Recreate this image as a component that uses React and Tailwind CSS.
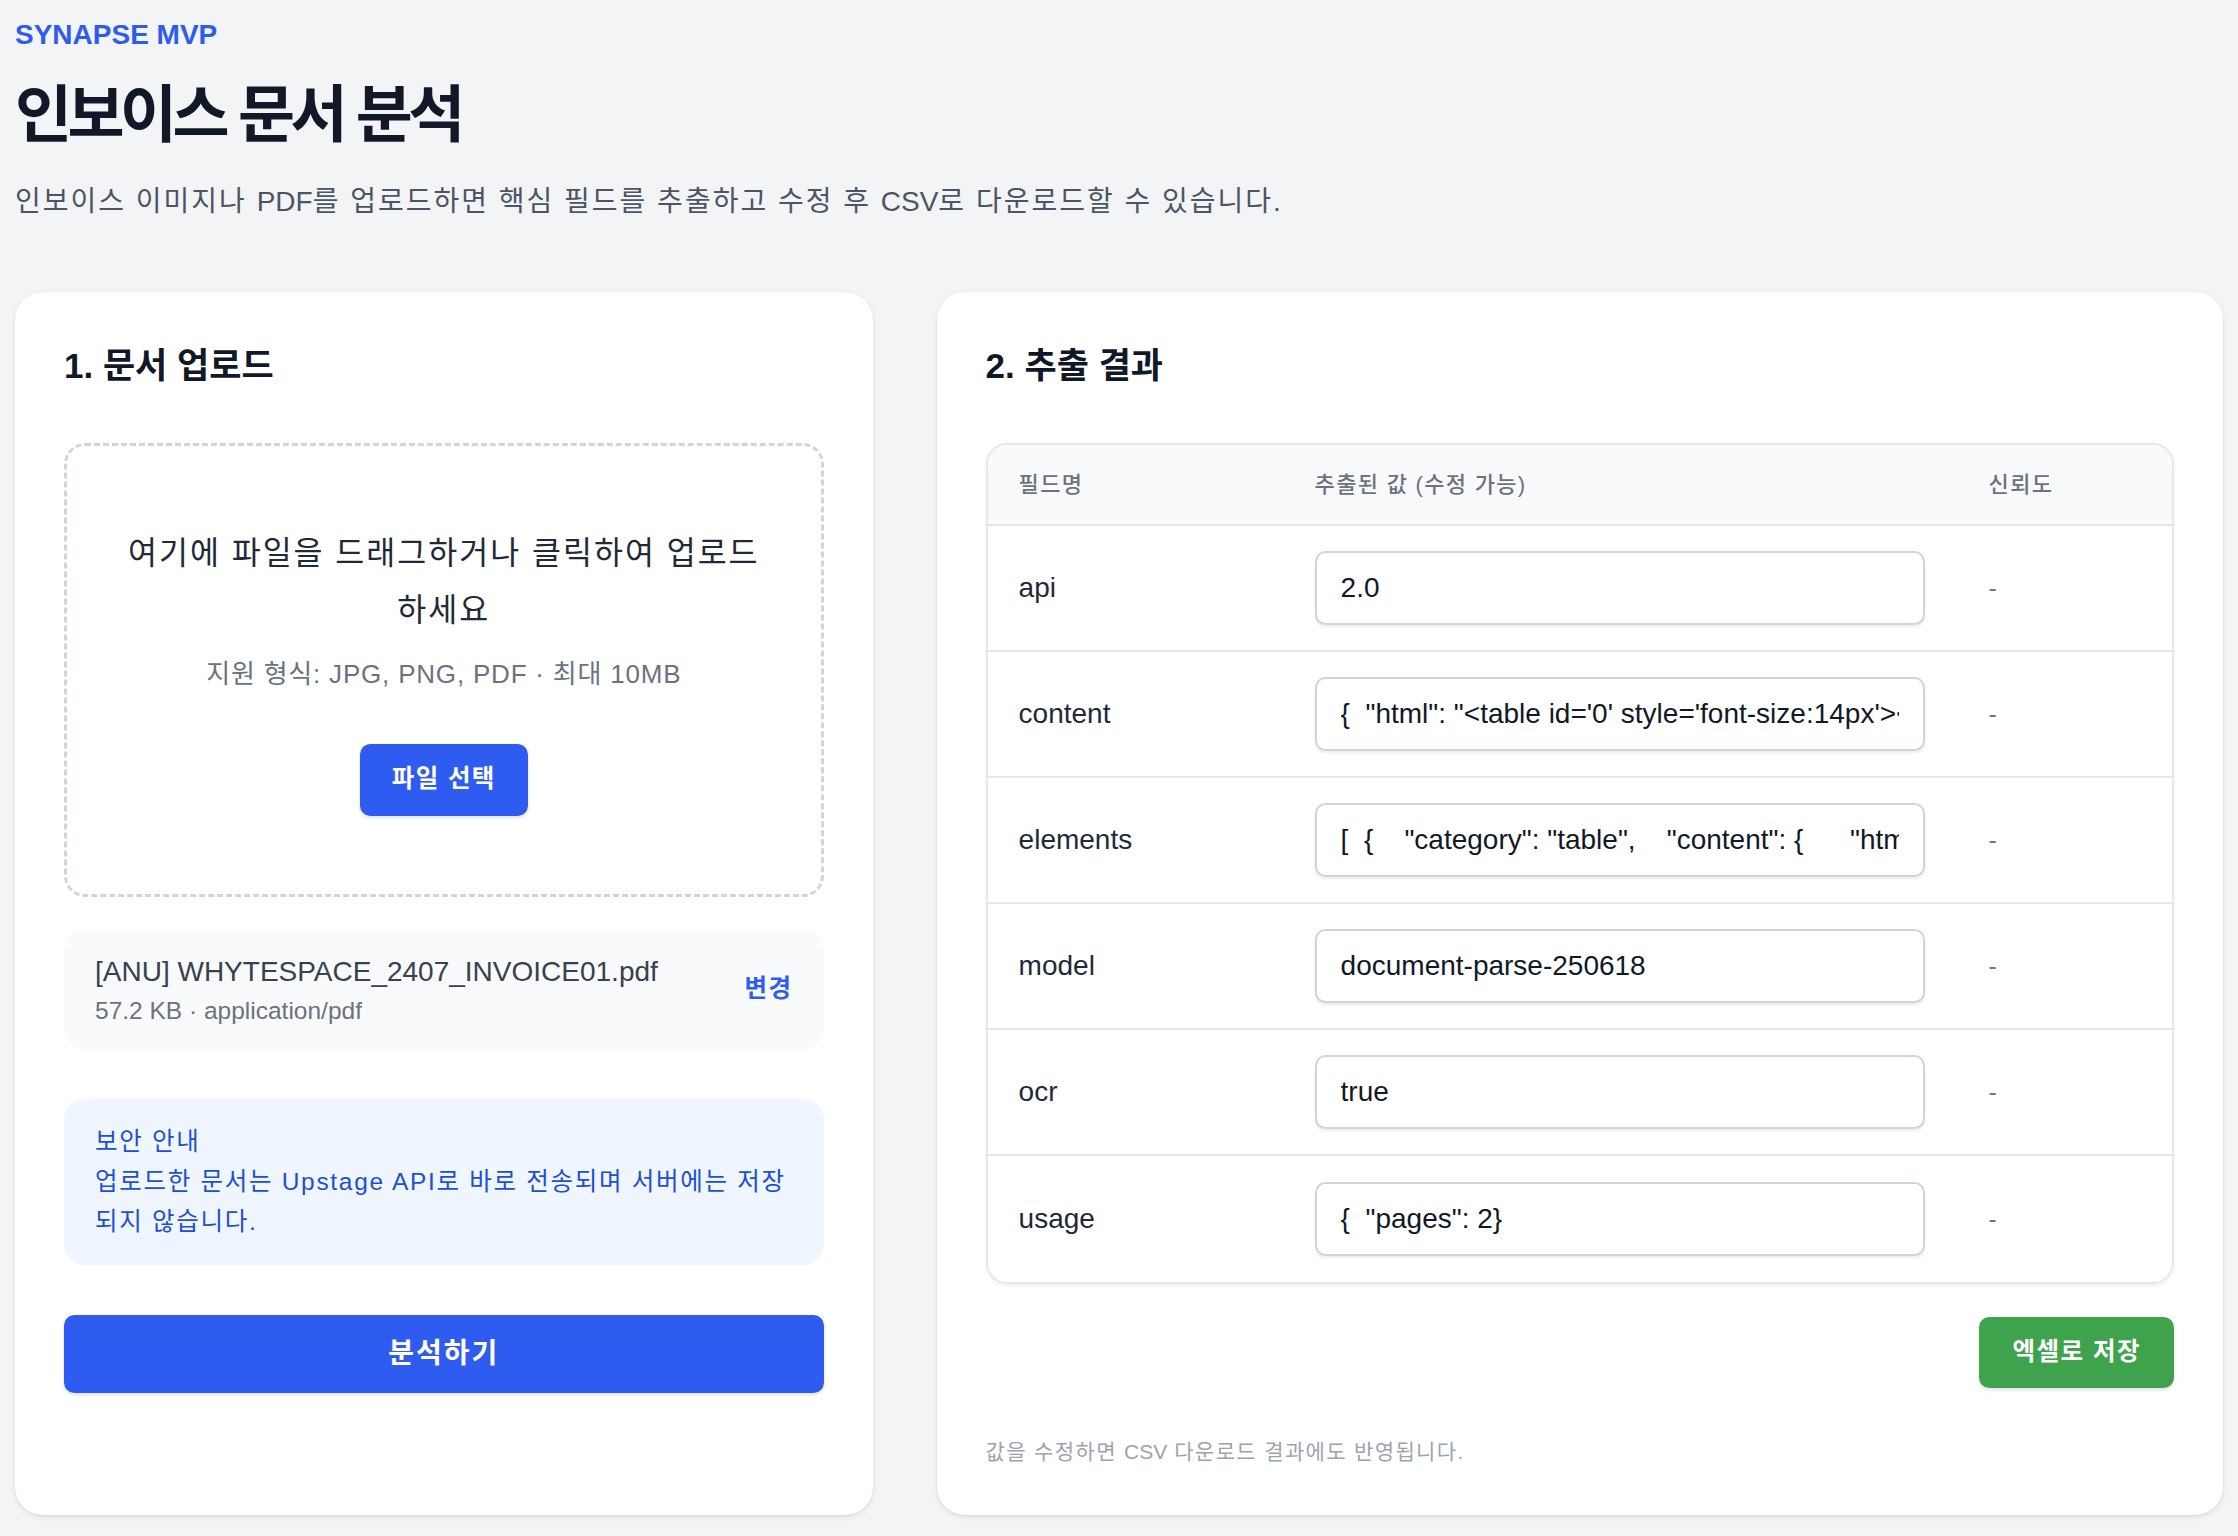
import React from 'react';

const rows = [
  { name: 'api', value: '2.0' },
  {
    name: 'content',
    value: JSON.stringify(
      {
        html: "<table id='0' style='font-size:14px'><thead><tr><th>Description</th><th>Qty</th><th>Amount</th></tr></thead></table>",
        markdown: '',
        text: '',
      },
      null,
      2
    ),
  },
  {
    name: 'elements',
    value: JSON.stringify(
      [
        {
          category: 'table',
          content: { html: "<table id='0'></table>", markdown: '', text: '' },
          id: 0,
          page: 1,
        },
      ],
      null,
      2
    ),
  },
  { name: 'model', value: 'document-parse-250618' },
  { name: 'ocr', value: 'true' },
  { name: 'usage', value: JSON.stringify({ pages: 2 }, null, 2) },
];

const font = { fontFamily: '"Liberation Sans", "Noto Sans CJK KR", Arial, sans-serif' };

// latin runs keep normal spacing inside tracked korean text
const Latin = ({ children }) => <span className="tracking-normal">{children}</span>;

const UploadCard = () => (
  <div className="rounded-[28px] bg-white p-[49px] shadow-[0_2px_6px_rgba(0,0,0,0.08),0_1px_3px_rgba(0,0,0,0.05)]">
    <h2 className="text-[35px] leading-[49px] font-semibold text-[#111827]">1. 문서 업로드</h2>

    <div className="mt-[53px] h-[454px] border-[3px] border-dashed border-[#d1d5db] rounded-[21px] flex flex-col items-center justify-center px-[56px] text-center">
      <p className="text-[31.5px] leading-[57px] tracking-[2px] text-[#1f2937]">여기에 파일을 드래그하거나 클릭하여 업로드하세요</p>
      <p className="mt-[18px] text-[26px] leading-[35px] tracking-[0.8px] text-[#6b7280]">지원 형식: JPG, PNG, PDF · 최대 10MB</p>
      <button className="mt-[52px] h-[72px] px-[32px] rounded-[10.5px] bg-[#2f5cf0] text-white text-[24.5px] tracking-[1.4px] font-semibold shadow-[0_2px_4px_rgba(0,0,0,0.12)]">
        파일 선택
      </button>
    </div>

    <div className="mt-[33px] rounded-[21px] bg-[#f9fafb] px-[31px] py-[21px] flex items-center justify-between">
      <div>
        <p className="text-[28px] leading-[42px] text-[#374151]">[ANU] WHYTESPACE_2407_INVOICE01.pdf</p>
        <p className="text-[24.5px] leading-[35px] text-[#6b7280]">57.2 KB · application/pdf</p>
      </div>
      <button className="text-[24.5px] tracking-[1.5px] font-semibold text-[#2f5cf0]">변경</button>
    </div>

    <div className="mt-[50px] rounded-[21px] bg-[#eff6ff] px-[31px] py-[23px] text-[24.5px] leading-[40px] tracking-[1.7px] text-[#1d4ed8]">
      <p>보안 안내</p>
      <p>업로드한 문서는 Upstage API로 바로 전송되며 서버에는 저장되지 않습니다.</p>
    </div>

    <button className="mt-[50px] w-full h-[78px] rounded-[10.5px] bg-[#2f5cf0] text-white text-[28px] tracking-[2px] font-semibold shadow-[0_2px_4px_rgba(0,0,0,0.12)]">
      분석하기
    </button>
  </div>
);

const ResultCard = () => (
  <div className="rounded-[28px] bg-white p-[49px] shadow-[0_2px_6px_rgba(0,0,0,0.08),0_1px_3px_rgba(0,0,0,0.05)]">
    <h2 className="text-[35px] leading-[49px] font-semibold text-[#111827]">2. 추출 결과</h2>

    <div className="mt-[53px] rounded-[21px] border-2 border-[#e5e7eb] overflow-hidden shadow-[0_2px_4px_rgba(0,0,0,0.06)]">
      <div className="grid grid-cols-[296px_672px_1fr] h-[81px] items-center bg-[#f9fafb] border-b-2 border-[#e5e7eb] text-[22px] font-medium tracking-[1.3px] text-[#6b7280]">
        <div className="px-[31px]">필드명</div>
        <div className="px-[31px]">추출된 값 (수정 가능)</div>
        <div className="pl-[33px]">신뢰도</div>
      </div>
      {rows.map((row, i) => (
        <div
          key={row.name}
          className={`grid grid-cols-[296px_672px_1fr] h-[126px] items-center ${i < rows.length - 1 ? 'border-b-2 border-[#e5e7eb]' : ''}`}
        >
          <div className="px-[31px] text-[28px] text-[#1f2937]">{row.name}</div>
          <div className="px-[31px]">
            <input
              defaultValue={row.value}
              className="w-full h-[74px] rounded-[10.5px] border-2 border-[#d1d5db] bg-white px-[24px] text-[28px] text-[#111827] shadow-[0_2px_3px_rgba(0,0,0,0.08)] outline-none"
              style={font}
            />
          </div>
          <div className="pl-[33px] text-[24.5px] text-[#6b7280]">-</div>
        </div>
      ))}
    </div>

    <div className="mt-[33px] flex justify-end">
      <button className="h-[71px] px-[33px] rounded-[10.5px] bg-[#3fa34d] text-white text-[24.5px] tracking-[1.5px] font-semibold shadow-[0_2px_4px_rgba(0,0,0,0.12)]">
        엑셀로 저장
      </button>
    </div>

    <p className="mt-[50px] text-[21px] leading-[28px] tracking-[1.35px] text-[#9ca3af]">
      값을 수정하면 <Latin>CSV</Latin> 다운로드 결과에도 반영됩니다.
    </p>
  </div>
);

export default function App() {
  return (
    <div className="min-h-screen bg-[#f3f4f6] px-[15px] pt-[14px] pb-[23px]" style={font}>
      <p className="text-[28px] leading-[42px] font-bold text-[#2f5cf0]">SYNAPSE MVP</p>
      <h1 className="mt-[25px] text-[62px] leading-[70px] tracking-[-4.5px] font-bold text-[#111827]">인보이스 문서 분석</h1>
      <p className="mt-[30px] text-[28px] leading-[42px] tracking-[2px] text-[#4b5563]">
        인보이스 이미지나 <Latin>PDF</Latin>를 업로드하면 핵심 필드를 추출하고 수정 후 <Latin>CSV</Latin>로 다운로드할 수 있습니다.
      </p>

      <div className="mt-[69px] grid grid-cols-[2fr_3fr] gap-[64px]">
        <UploadCard />
        <ResultCard />
      </div>
    </div>
  );
}
